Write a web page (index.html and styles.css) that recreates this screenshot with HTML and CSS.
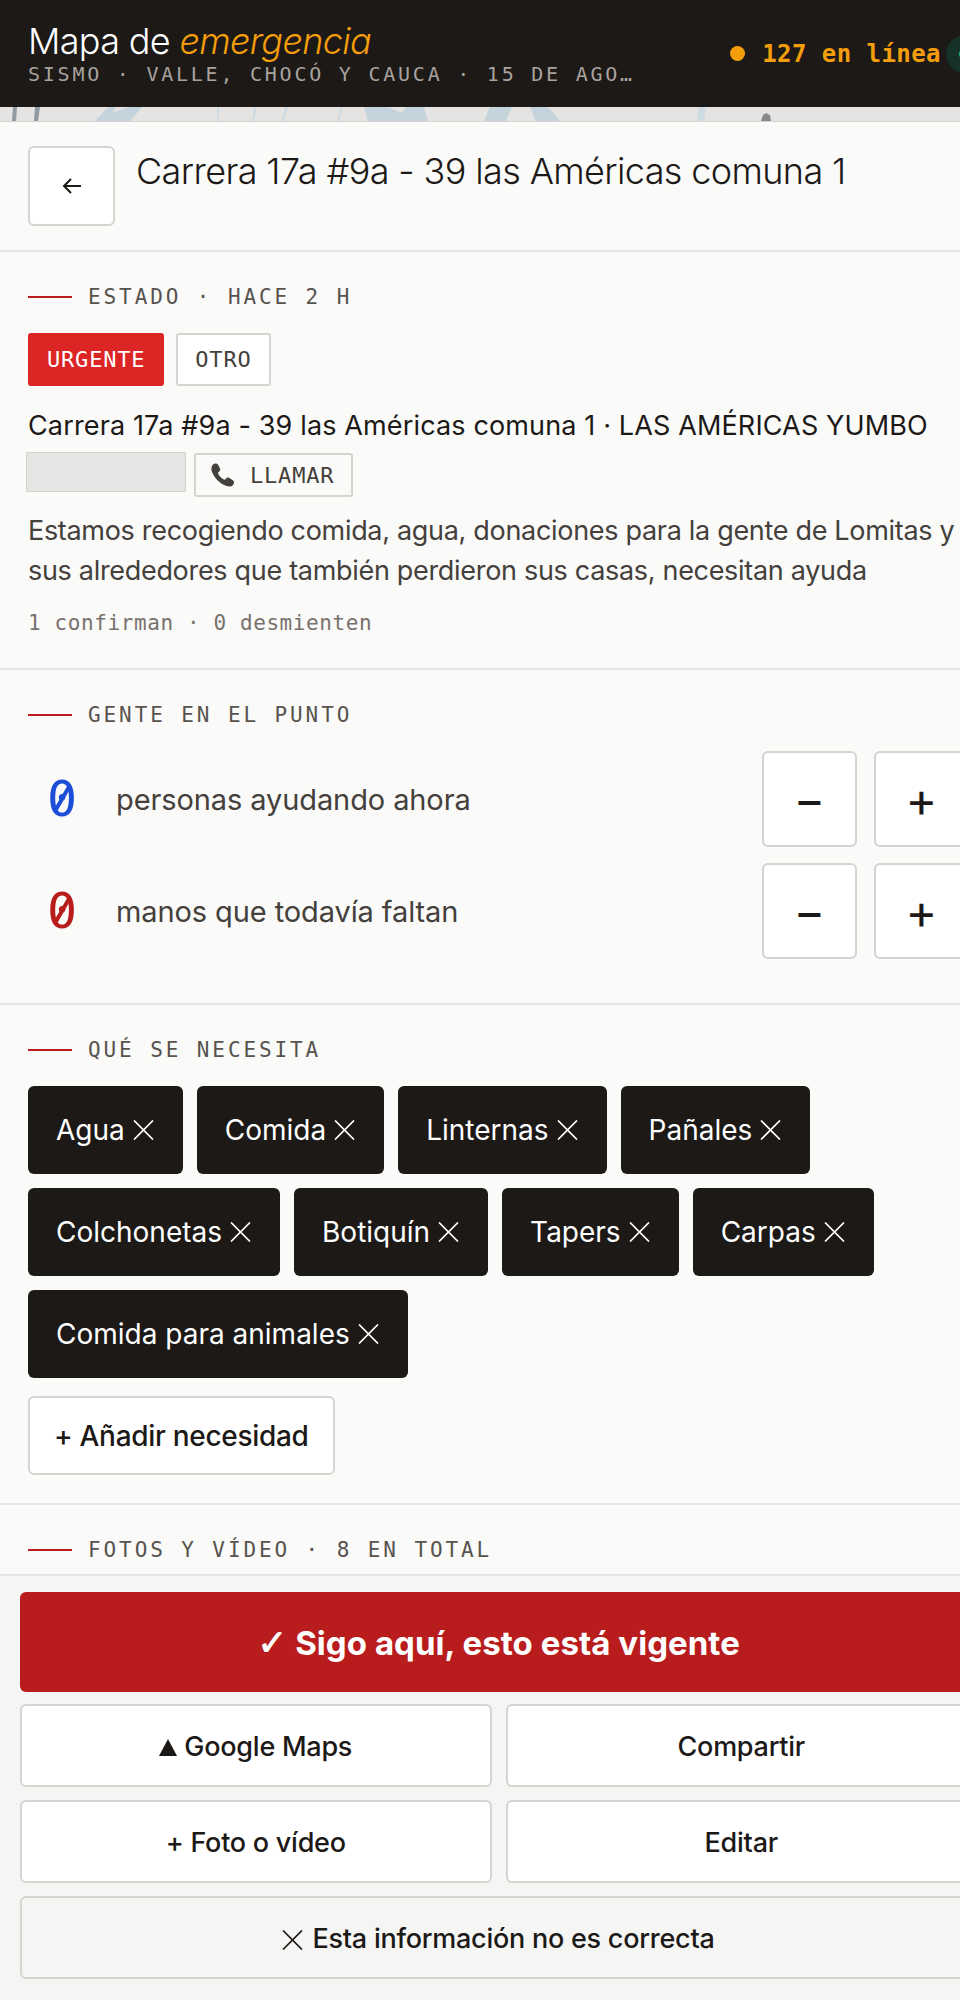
FILE: index.html
```
<!DOCTYPE html>
<html lang="es">
  <head>
    <meta charset="UTF-8" />
    <meta name="viewport" content="width=device-width, initial-scale=1.0" />
    <title>Mapa de emergencia</title>
    <link rel="stylesheet" href="styles.css">
  </head>
  <body>
    <!-- Shared icons -->
    <svg class="sprite" width="0" height="0">
      <symbol id="icon-x" viewBox="0 0 21 20">
        <path d="M1 0.5 L20 19.5 M20 0.5 L1 19.5" fill="none" stroke="currentColor" stroke-width="1.7" />
      </symbol>
    </svg>

    <div class="app">
      <!-- Header -->
      <header class="topbar">
        <div class="brand">
          <h1>Mapa de <em>emergencia</em></h1>
          <p>SISMO · VALLE, CHOCÓ Y CAUCA · 15 DE AGOSTO</p>
        </div>
        <div class="online">
          <span class="online-dot"></span>
          <span>127 en línea</span>
          <span class="live"><span class="live-dot"></span></span>
        </div>
      </header>

      <!-- Map peeking out behind the panel -->
      <div class="map-strip">
        <svg viewBox="0 0 997 14" width="997" height="14">
          <path d="M13 0 H17 L16 14 H12 Z M35 0 H40 L38 14 H34 Z" fill="#8f9aa3" />
          <path d="M95 14 L108 0 H116 L112 6 L128 0 H142 L130 14 Z" fill="#c5d3dc" />
          <path d="M217 0 H219 V14 H217 Z M254 0 H257 L254 14 H252 Z M285 0 H288 L284 14 H282 Z M341 0 H343 L339 14 H337 Z" fill="#cfdbe2" />
          <path d="M364 0 H388 L402 6 L406 0 H424 L428 14 H368 Z" fill="#c5d3dc" />
          <path d="M490 0 H512 L506 14 H484 Z M530 0 H548 L560 14 H536 Z" fill="#c5d3dc" />
          <path d="M698 0 H706 L704 14 H697 Z" fill="#cfdbe2" />
          <path d="M761 14 L763 8 L766 6 L770 8 L771 14 Z" fill="#8a8a8c" />
        </svg>
      </div>

      <main class="panel">
        <div class="panel-head">
          <button class="back">
            <svg viewBox="0 0 24 24" width="24" height="24" fill="none" stroke="#1c1917" stroke-width="2">
              <path d="M21 12 H4 M11 5 L4 12 L11 19" />
            </svg>
          </button>
          <h2>Carrera 17a #9a - 39 las Américas comuna 1</h2>
        </div>

        <!-- Estado -->
        <section class="section">
          <div class="label">ESTADO · HACE 2 H</div>
          <div class="tags">
            <span class="tag tag-urgent">URGENTE</span>
            <span class="tag">OTRO</span>
          </div>
          <p class="address">Carrera 17a #9a - 39 las Américas comuna 1 · LAS AMÉRICAS YUMBO</p>
          <div class="contact">
            <span class="phone-blank"></span>
            <a class="call">
              <svg viewBox="2.5 2 20 20" width="24" height="24" fill="#44403c">
                <path d="M4 3.5 C5.5 2 7.5 2 8.3 3.3 L10 6.5 C10.5 7.6 10.2 8.5 9.2 9.2 L8.3 9.9 C8.8 12.5 11.5 15.5 14.2 16 L15 15 C15.7 14.1 16.8 13.9 17.8 14.5 L20.8 16.4 C22 17.3 22 19 20.8 20.3 C19.5 21.7 17.5 22 15 21 C9.5 18.9 5 14 3.2 9 C2.5 6.8 2.8 4.8 4 3.5 Z" />
              </svg>
              LLAMAR
            </a>
          </div>
          <p class="desc">Estamos recogiendo comida, agua, donaciones para la gente de Lomitas y sus alrededores que también perdieron sus casas, necesitan ayuda</p>
          <p class="votes">1 confirman · 0 desmienten</p>
        </section>

        <!-- Gente -->
        <section class="section section-people">
          <div class="label">GENTE EN EL PUNTO</div>
          <div class="counter">
            <span class="count count-blue">0</span>
            <span class="counter-text">personas ayudando ahora</span>
            <button class="step">−</button>
            <button class="step">+</button>
          </div>
          <div class="counter">
            <span class="count count-red">0</span>
            <span class="counter-text">manos que todavía faltan</span>
            <button class="step">−</button>
            <button class="step">+</button>
          </div>
        </section>

        <!-- Necesidades -->
        <section class="section section-needs">
          <div class="label">QUÉ SE NECESITA</div>
          <div class="chips">
            <span class="chip">Agua<svg class="x"><use href="#icon-x" /></svg></span>
            <span class="chip">Comida<svg class="x"><use href="#icon-x" /></svg></span>
            <span class="chip">Linternas<svg class="x"><use href="#icon-x" /></svg></span>
            <span class="chip">Pañales<svg class="x"><use href="#icon-x" /></svg></span>
            <span class="chip">Colchonetas<svg class="x"><use href="#icon-x" /></svg></span>
            <span class="chip">Botiquín<svg class="x"><use href="#icon-x" /></svg></span>
            <span class="chip">Tapers<svg class="x"><use href="#icon-x" /></svg></span>
            <span class="chip">Carpas<svg class="x"><use href="#icon-x" /></svg></span>
            <span class="chip">Comida para animales<svg class="x"><use href="#icon-x" /></svg></span>
          </div>
          <button class="add">+ Añadir necesidad</button>
        </section>

        <!-- Fotos -->
        <section class="section">
          <div class="label">FOTOS Y VÍDEO · 8 EN TOTAL</div>
        </section>
      </main>

      <!-- Actions -->
      <footer class="actions">
        <button class="btn-primary"><span class="check">✓</span> Sigo aquí, esto está vigente</button>
        <div class="action-grid">
          <button class="btn">
            <svg class="tri" viewBox="0 0 18 17" width="18" height="17"><path d="M9 0 L18 17 H0 Z" fill="#1c1917" /></svg>
            Google Maps
          </button>
          <button class="btn">Compartir</button>
          <button class="btn">+ Foto o vídeo</button>
          <button class="btn">Editar</button>
        </div>
        <button class="btn btn-muted"><svg class="x x-left"><use href="#icon-x" /></svg>Esta información no es correcta</button>
      </footer>
    </div>
  </body>
</html>
```

FILE: styles.css
```
html,
body {
  margin: 0;
  height: 100%;
  overflow: hidden;
}

body {
  font-family: Inter, "Noto Sans", sans-serif;
  color: #1c1917;
  background: #fafaf9;
}

h1,
h2,
p {
  margin: 0;
}

button {
  font-family: inherit;
  cursor: pointer;
}

.sprite {
  position: absolute;
}

/* The page is wider than the window, the right edge gets cut off */
.app {
  width: 997px;
  height: 2000px;
  display: flex;
  flex-direction: column;
}

/* Header */
.topbar {
  height: 107px;
  flex-shrink: 0;
  box-sizing: border-box;
  padding: 0 0 0 28px;
  display: flex;
  align-items: center;
  justify-content: space-between;
  background: #1c1917;
}

.brand {
  width: 610px;
}

.brand h1 {
  font-size: 36px;
  line-height: 40px;
  font-weight: 300;
  letter-spacing: -0.67px;
  color: #fff;
}

.brand h1 em {
  color: #f59e0b;
}

.brand p {
  margin-top: 1px;
  font-family: "DejaVu Sans Mono", monospace;
  font-size: 20px;
  line-height: 24px;
  letter-spacing: 2.76px;
  color: #a8a29e;
  white-space: nowrap;
  overflow: hidden;
  text-overflow: ellipsis;
}

.online {
  display: flex;
  align-items: center;
  font-family: "DejaVu Sans Mono", monospace;
  font-size: 24px;
  letter-spacing: 0.45px;
  font-weight: 700;
  color: #f59e0b;
}

.online-dot {
  width: 15px;
  height: 15px;
  margin-right: 17px;
  border-radius: 50%;
  background: #f59e0b;
}

.live {
  width: 38px;
  height: 38px;
  margin: 0 13px 0 5px;
  display: flex;
  align-items: center;
  justify-content: center;
  border-radius: 50%;
  background: #163127;
}

.live-dot {
  width: 12px;
  height: 12px;
  border-radius: 50%;
  background: #10b981;
}

/* Map strip */
.map-strip {
  height: 14px;
  flex-shrink: 0;
  overflow: hidden;
  background: #e5e4e2;
  border-bottom: 1px solid #d6d3d1;
}

.map-strip svg {
  display: block;
  filter: blur(0.6px);
}

/* Panel */
.panel {
  flex: 1;
  min-height: 0;
  overflow: hidden;
}

.panel-head {
  display: flex;
  align-items: flex-start;
  gap: 21px;
  padding: 24px 28px;
  border-bottom: 2px solid #e7e5e4;
}

.back {
  width: 87px;
  height: 80px;
  padding: 0;
  flex-shrink: 0;
  display: flex;
  align-items: center;
  justify-content: center;
  background: #fff;
  border: 2px solid #d6d3d1;
  border-radius: 6px;
}

.panel-head h2 {
  font-size: 36px;
  line-height: 50px;
  font-weight: 300;
  letter-spacing: -0.62px;
}

.section {
  padding: 32px 28px 32px;
  border-bottom: 2px solid #e7e5e4;
}

.section-people {
  padding-bottom: 44px;
}

.section-needs {
  padding-bottom: 28px;
}

.label {
  display: flex;
  align-items: center;
  gap: 16px;
  margin-bottom: -1px;
  font-family: "DejaVu Sans Mono", monospace;
  font-size: 21px;
  line-height: 26px;
  letter-spacing: 2.9px;
  color: #57534e;
}

.label::before {
  content: "";
  width: 44px;
  height: 2px;
  background: #b91c1c;
}

/* Estado */
.tags {
  display: flex;
  gap: 12px;
  margin-top: 24px;
}

.tag {
  height: 53px;
  box-sizing: border-box;
  padding: 0 17px;
  display: flex;
  align-items: center;
  font-family: "DejaVu Sans Mono", monospace;
  font-size: 22px;
  letter-spacing: 0.8px;
  color: #44403c;
  background: #fff;
  border: 2px solid #d6d3d1;
  border-radius: 3px;
}

.tag-urgent {
  color: #fff;
  background: #dc2626;
  border-color: #dc2626;
}

.address {
  margin-top: 22px;
  font-size: 27px;
  line-height: 36px;
  letter-spacing: 0.14px;
  white-space: nowrap;
}

.contact {
  display: flex;
  align-items: flex-start;
  gap: 8px;
  margin: 8px 0 0 -2px;
}

.phone-blank {
  width: 158px;
  height: 38px;
  background: #e7e5e4;
  border: 1px solid #d6d3d1;
}

.call {
  height: 44px;
  box-sizing: border-box;
  margin-top: 1px;
  padding: 0 17px 0 15px;
  display: flex;
  align-items: center;
  gap: 15px;
  font-family: "DejaVu Sans Mono", monospace;
  font-size: 22px;
  letter-spacing: 0.8px;
  color: #44403c;
  background: #fafaf9;
  border: 2px solid #d6d3d1;
  border-radius: 3px;
}

.desc {
  margin-top: 14px;
  font-size: 27px;
  line-height: 40px;
  letter-spacing: -0.31px;
  color: #44403c;
}

.votes {
  margin-top: 19px;
  font-family: "DejaVu Sans Mono", monospace;
  font-size: 21px;
  line-height: 26px;
  letter-spacing: 0.6px;
  color: #78716c;
}

/* Gente */
.counter {
  display: flex;
  align-items: center;
  margin-top: 16px;
}

.label + .counter {
  margin-top: 24px;
}

.count {
  width: 68px;
  margin-right: 20px;
  position: relative;
  text-align: center;
  font-family: "DejaVu Sans Mono", monospace;
  font-size: 50px;
  line-height: 50px;
}

/* long diagonal slash through the zero */
.count::after {
  content: "";
  position: absolute;
  left: 32px;
  top: 10px;
  width: 4px;
  height: 30px;
  background: currentColor;
  transform: rotate(30deg);
}

.count-blue {
  color: #1d4ed8;
}

.count-red {
  color: #b91c1c;
}

.counter-text {
  flex: 1;
  font-size: 29px;
  letter-spacing: -0.1px;
  color: #44403c;
}

.step {
  width: 95px;
  height: 96px;
  margin-left: 17px;
  padding: 0;
  font-size: 48px;
  font-weight: 400;
  color: #1c1917;
  background: #fff;
  border: 2px solid #d6d3d1;
  border-radius: 6px;
}

/* Chips */
.chips {
  display: flex;
  flex-wrap: wrap;
  gap: 14px;
  margin-top: 24px;
}

.chip {
  height: 88px;
  box-sizing: border-box;
  padding: 0 29px 0 28px;
  display: flex;
  align-items: center;
  font-size: 28px;
  color: #fff;
  background: #1c1917;
  border-radius: 6px;
}

.x {
  width: 21px;
  height: 20px;
  margin-left: 8px;
  color: inherit;
}

.x-left {
  margin: 0 9px 0 0;
  vertical-align: -2px;
}

.add {
  height: 79px;
  margin-top: 18px;
  padding: 0 24px;
  display: block;
  font-size: 28px;
  font-weight: 500;
  letter-spacing: -0.3px;
  color: #1c1917;
  background: #fff;
  border: 2px solid #d6d3d1;
  border-radius: 6px;
}

/* Actions */
.actions {
  flex-shrink: 0;
  box-sizing: border-box;
  height: 426px;
  padding: 16px 20px 0;
  display: flex;
  flex-direction: column;
  gap: 13px;
  background: #f5f5f4;
  border-top: 2px solid #e7e5e4;
}

.action-grid {
  display: grid;
  grid-template-columns: 1fr 1fr;
  gap: 13px 14px;
  margin-top: -1px;
}

.btn-primary {
  height: 100px;
  flex-shrink: 0;
  font-size: 33px;
  font-weight: 700;
  letter-spacing: 0.05px;
  color: #fff;
  background: #b91c1c;
  border: none;
  border-radius: 6px;
}

.check {
  font-family: "DejaVu Sans", sans-serif;
  font-size: 36px;
  font-weight: 700;
  -webkit-text-stroke: 0.8px #fff;
}

.btn {
  height: 83px;
  flex-shrink: 0;
  padding-top: 3px;
  font-size: 27px;
  font-weight: 500;
  letter-spacing: -0.25px;
  color: #1c1917;
  background: #fff;
  border: 2px solid #d6d3d1;
  border-radius: 6px;
}

.tri {
  margin-right: 0;
}

.btn-muted {
  background: #f5f5f4;
}
```
